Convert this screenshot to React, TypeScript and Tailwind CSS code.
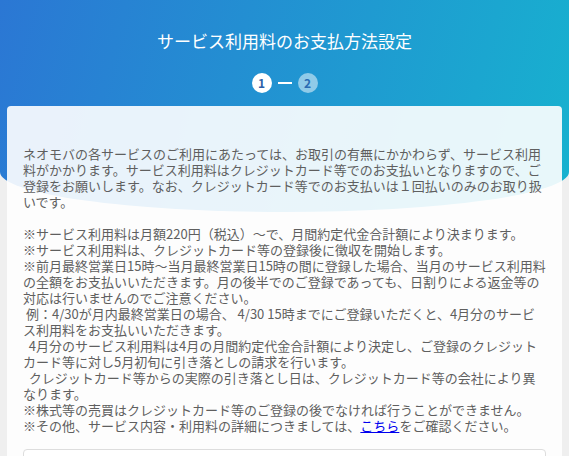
import React from "react";

function Steps() {
  return (
    <div className="mt-5 flex items-center justify-center gap-[6px]">
      <div className="flex h-5 w-5 items-center justify-center rounded-full bg-white text-[12px] font-bold leading-none text-[#2c5ea8]">
        1
      </div>
      <div className="h-[1.5px] w-[14px] bg-white" />
      <div className="flex h-5 w-5 items-center justify-center rounded-full bg-white/50 text-[12px] font-bold leading-none text-[#2b6cb3]">
        2
      </div>
    </div>
  );
}

export default function App() {
  return (
    <div className="min-h-screen bg-[#efefef] font-['Noto_Sans_CJK_JP','Noto_Sans',sans-serif]">
      {/* Header */}
      <div className="h-[212px] rounded-b-[50%_40px] bg-[linear-gradient(105deg,#2b77d4,#17b2cf)] pt-[29px]">
        <h1 className="text-center text-[17px] font-normal leading-6 text-white">
          サービス利用料のお支払方法設定
        </h1>
        <Steps />
      </div>

      {/* Card */}
      <div className="relative mx-[7px] -mt-[106px] rounded-[4px] bg-white/90 px-4 pt-10 pb-6 text-[13px] leading-4 text-[#5f5f5f]">
        <p>
          ネオモバの各サービスのご利用にあたっては、お取引の有無にかかわらず、サービス利用料がかかります。サービス利用料はクレジットカード等でのお支払いとなりますので、ご登録をお願いします。なお、クレジットカード等でのお支払いは１回払いのみのお取り扱いです。
        </p>
        <br />
        <p>
          ※サービス利用料は月額220円（税込）～で、月間約定代金合計額により決まります。
          <br />
          ※サービス利用料は、クレジットカード等の登録後に徴収を開始します。
          <br />
          ※前月最終営業日15時～当月最終営業日15時の間に登録した場合、当月のサービス利用料の全額をお支払いいただきます。月の後半でのご登録であっても、日割りによる返金等の対応は行いませんのでご注意ください。
          <br />
          {"\u00a0"}例：4/30が月内最終営業日の場合、 4/30 15時までにご登録いただくと、4月分のサービス利用料をお支払いいただきます。
          <br />
          {"\u00a0\u00a0"}4月分のサービス利用料は4月の月間約定代金合計額により決定し、ご登録のクレジットカード等に対し5月初旬に引き落としの請求を行います。
          <br />
          {"\u00a0\u00a0"}クレジットカード等からの実際の引き落とし日は、クレジットカード等の会社により異なります。
          <br />
          ※株式等の売買はクレジットカード等のご登録の後でなければ行うことができません。
          <br />
          ※その他、サービス内容・利用料の詳細につきましては、
          <a href="#" className="text-[#0000ee] underline">
            こちら
          </a>
          をご確認ください。
        </p>

        <div className="mt-[15px] h-[120px] rounded-[4px] border border-[#dddddd] bg-white" />
      </div>
    </div>
  );
}
